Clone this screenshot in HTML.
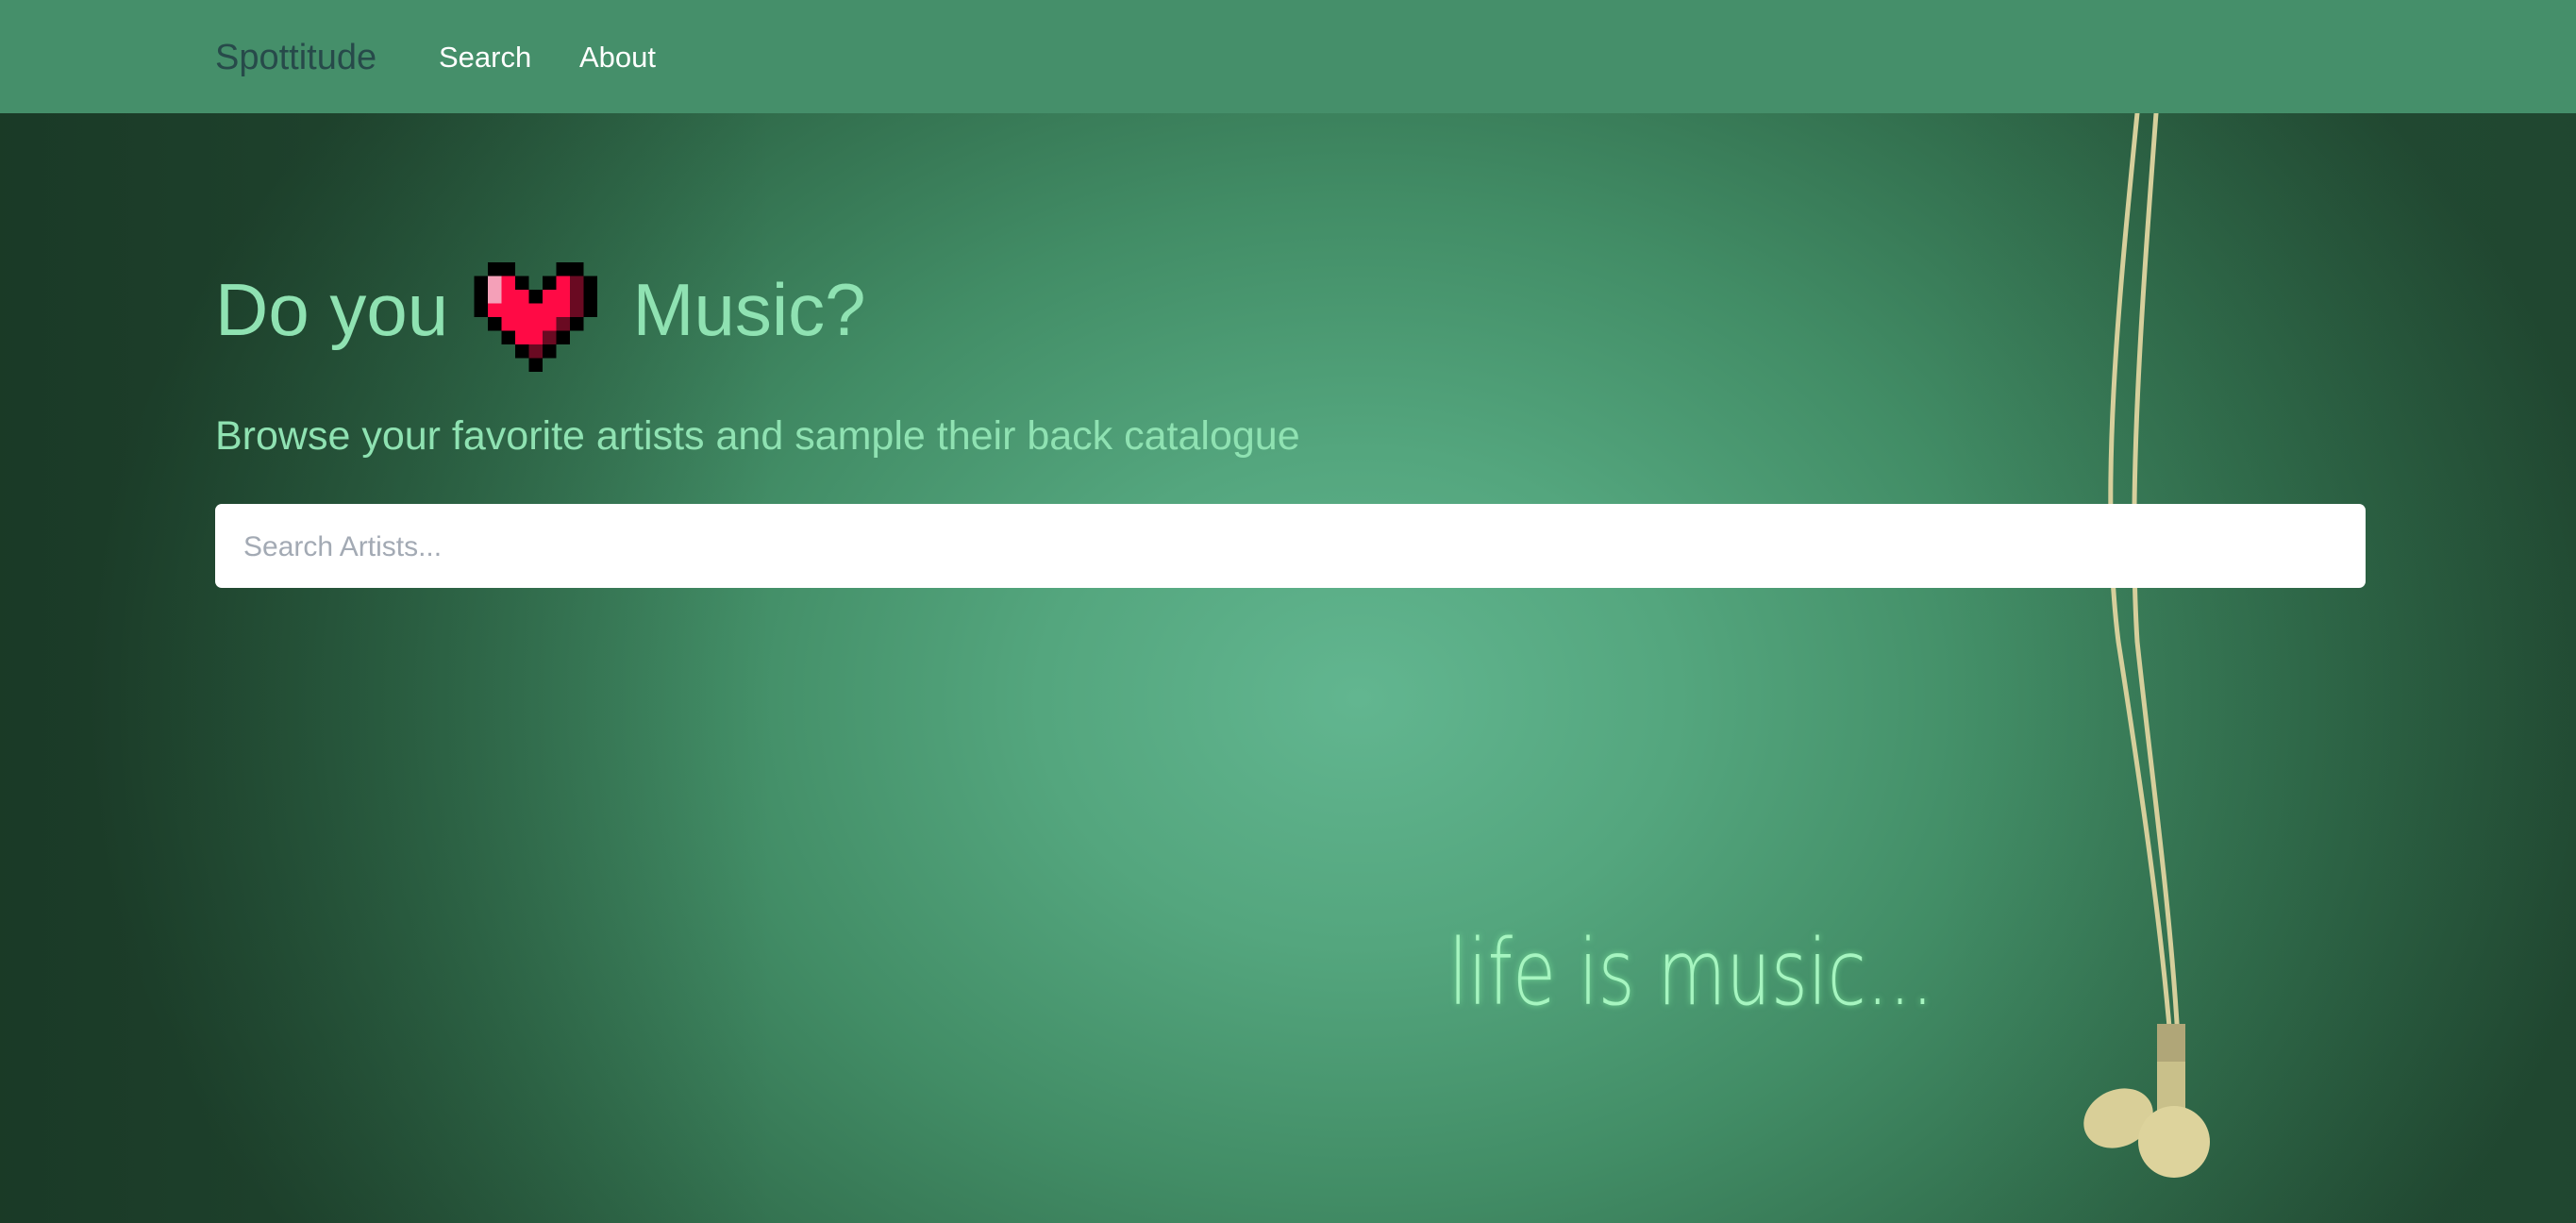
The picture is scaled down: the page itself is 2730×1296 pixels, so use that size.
<!DOCTYPE html>
<html><head><meta charset="utf-8"><style>
html,body{margin:0;padding:0;width:2730px;height:1296px;overflow:hidden;font-family:"Liberation Sans",sans-serif}
.nav{position:absolute;left:0;top:0;width:2730px;height:120px;background:#458f6a}
.brand{position:absolute;left:228px;top:38px;font-size:38px;color:#274a4a;line-height:46px}
.nl{position:absolute;top:41px;font-size:31px;color:#fff;line-height:40px}
.hero{position:absolute;left:0;top:120px;width:2730px;height:1176px;
background:radial-gradient(ellipse 1350px 1050px at 1440px 620px,#62b690 0%,#54a67e 25%,#428d66 50%,#316d4c 75%,#234c34 100%)}
.dark{position:absolute;left:0;top:0;width:2730px;height:1176px;background:linear-gradient(90deg,rgba(15,35,22,.45) 0%,rgba(15,35,22,0) 30%,rgba(15,35,22,0) 75%,rgba(15,40,25,.15) 100%)}
h1{position:absolute;left:228px;top:278px;margin:0;font-weight:normal;font-size:78px;color:#8fe2b2;line-height:100px;white-space:nowrap}
.sub{position:absolute;left:228px;top:432px;font-size:43px;color:#8fe2b2;line-height:60px;white-space:nowrap;font-weight:300}
.search{position:absolute;left:228px;top:534px;width:2279px;height:89px;background:#fff;border-radius:7px}
.search span{position:absolute;left:30px;top:29px;font-size:30px;color:#a3aab4}
.life{position:absolute;left:1535px;top:975px;font-family:"DejaVu Sans",sans-serif;font-weight:200;font-size:96px;color:#a6f5c0;text-shadow:0 0 8px rgba(140,255,170,.6);white-space:nowrap;transform:scaleX(0.78);transform-origin:0 0}
</style></head><body>
<div class="nav">
<div class="brand">Spottitude</div>
<div class="nl" style="left:465px">Search</div>
<div class="nl" style="left:614px">About</div>
</div>
<div class="hero"><div class="dark"></div>
<svg style="position:absolute;left:0;top:0" width="2730" height="1176">
<g fill="none" stroke="#d6cf9c" stroke-width="5" stroke-linecap="round">
<path d="M2265 0 C2245 200 2225 400 2245 560 C2270 720 2290 860 2300 980"/>
<path d="M2285 0 C2270 200 2255 400 2265 560 C2280 700 2300 840 2308 980"/>
</g>
<rect x="2286" y="965" width="30" height="105" fill="#c9c08a"/>
<rect x="2286" y="965" width="30" height="40" fill="#b0a678"/>
<ellipse cx="2245" cy="1065" rx="38" ry="30" fill="#d9cf98" transform="rotate(-25 2245 1065)"/>
<circle cx="2304" cy="1090" r="38" fill="#ddd39c"/>
</svg>
</div>
<h1>Do you <span style="display:inline-block;width:152px"></span> Music?</h1>
<svg style="position:absolute;left:502px;top:278px" width="131" height="116" viewBox="0 0 9 8" shape-rendering="crispEdges">
<g fill="#000">
<rect x="1" y="0" width="2" height="1"/><rect x="6" y="0" width="2" height="1"/>
<rect x="0" y="1" width="1" height="3"/><rect x="8" y="1" width="1" height="3"/>
<rect x="3" y="1" width="1" height="1"/><rect x="5" y="1" width="1" height="1"/><rect x="4" y="2" width="1" height="1"/>
<rect x="1" y="4" width="1" height="1"/><rect x="7" y="4" width="1" height="1"/>
<rect x="2" y="5" width="1" height="1"/><rect x="6" y="5" width="1" height="1"/>
<rect x="3" y="6" width="1" height="1"/><rect x="5" y="6" width="1" height="1"/>
<rect x="4" y="7" width="1" height="1"/>
</g>
<g fill="#ff0a45">
<rect x="2" y="1" width="1" height="1"/><rect x="6" y="1" width="1" height="1"/>
<rect x="2" y="2" width="2" height="1"/><rect x="5" y="2" width="2" height="1"/>
<rect x="1" y="3" width="6" height="1"/><rect x="2" y="4" width="4" height="1"/><rect x="3" y="5" width="2" height="1"/>
</g>
<g fill="#f4a0b8"><rect x="1" y="1" width="1" height="2"/></g>
<g fill="#6a0a22">
<rect x="7" y="1" width="1" height="3"/><rect x="6" y="4" width="1" height="1"/><rect x="5" y="5" width="1" height="1"/><rect x="4" y="6" width="1" height="1"/>
</g>
</svg>
<div class="sub">Browse your favorite artists and sample their back catalogue</div>
<div class="search"><span>Search Artists...</span></div>
<div class="life">life is music...</div>
</body></html>
